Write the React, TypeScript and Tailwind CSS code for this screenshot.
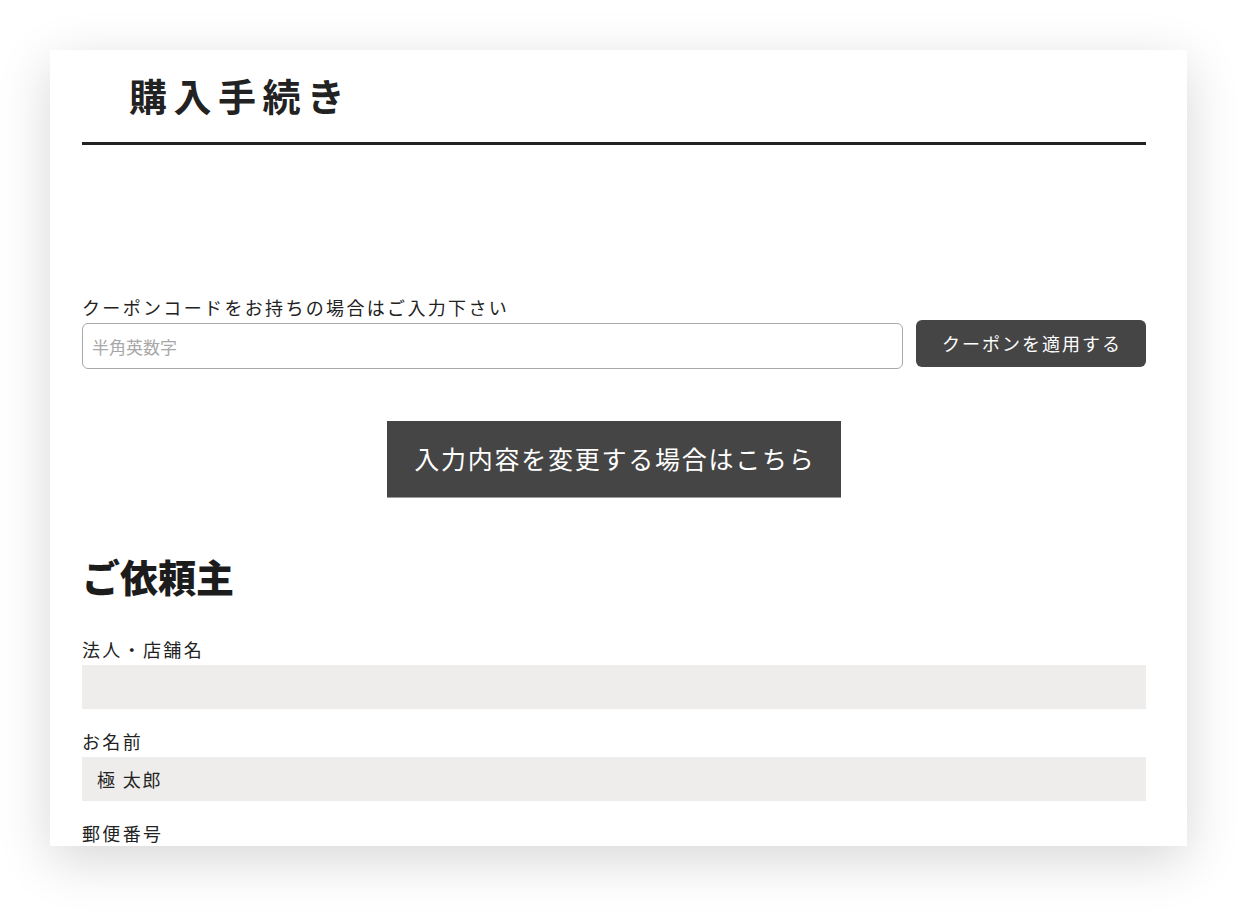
import React from "react";

const jp = "font-['Noto_Sans_CJK_JP','Noto_Sans',sans-serif]";
const label = "h-[24px] text-[18px] leading-[24px] tracking-[0.13em] text-[#222]";

function Field({ title, value }: { title: string; value?: string }) {
  return (
    <div className="mt-[20px]">
      <div className={label}>{title}</div>
      <div className="mt-[4px] flex h-[44px] items-center bg-[#eeedeb] pl-[15px] text-[18px] tracking-[0.1em] text-[#222]">
        {value}
      </div>
    </div>
  );
}

export default function App() {
  return (
    <div className={`min-h-[917px] bg-white pl-[50px] pt-[50px] ${jp}`}>
      <div className="h-[796px] w-[1137px] overflow-hidden bg-white pl-[32px] pr-[41px] shadow-[0_14px_50px_rgba(0,0,0,0.16)]">
        <h1 className="ml-[47px] mt-[26px] h-[38px] text-[38px] font-bold leading-[38px] tracking-[0.17em] text-[#222]">
          購入手続き
        </h1>
        <div className="mt-[28px] h-[3px] bg-[#222]" />

        <div className={`mt-[150px] ${label}`}>クーポンコードをお持ちの場合はご入力下さい</div>
        <div className="mt-[1px] flex items-start gap-[13px]">
          <input
            type="text"
            placeholder="半角英数字"
            className="mt-[3px] h-[46px] flex-1 rounded-[6px] border border-[#a9a9a9] bg-white px-[9px] text-[17px] text-[#222] outline-none placeholder:text-[#a8a8a8]"
          />
          <button className="h-[47px] w-[230px] rounded-[6px] bg-[#454545] pl-[2px] text-[18px] tracking-[0.11em] text-white">
            クーポンを適用する
          </button>
        </div>

        <div className="mt-[52px] flex justify-center">
          <button className="h-[76px] w-[454px] bg-[#454545] pl-[2px] text-[25px] tracking-[0.07em] text-white shadow-[0_1px_0_#9a9a9a]">
            入力内容を変更する場合はこちら
          </button>
        </div>

        <h2 className="mt-[60px] h-[38px] text-[38px] font-black leading-[38px] text-[#1c1c1c]">ご依頼主</h2>

        <div className="mt-[42px]">
          <div className={label}>法人・店舗名</div>
          <div className="mt-[4px] h-[44px] bg-[#eeedeb]" />
        </div>
        <Field title="お名前" value="極 太郎" />
        <Field title="郵便番号" />
      </div>
    </div>
  );
}
